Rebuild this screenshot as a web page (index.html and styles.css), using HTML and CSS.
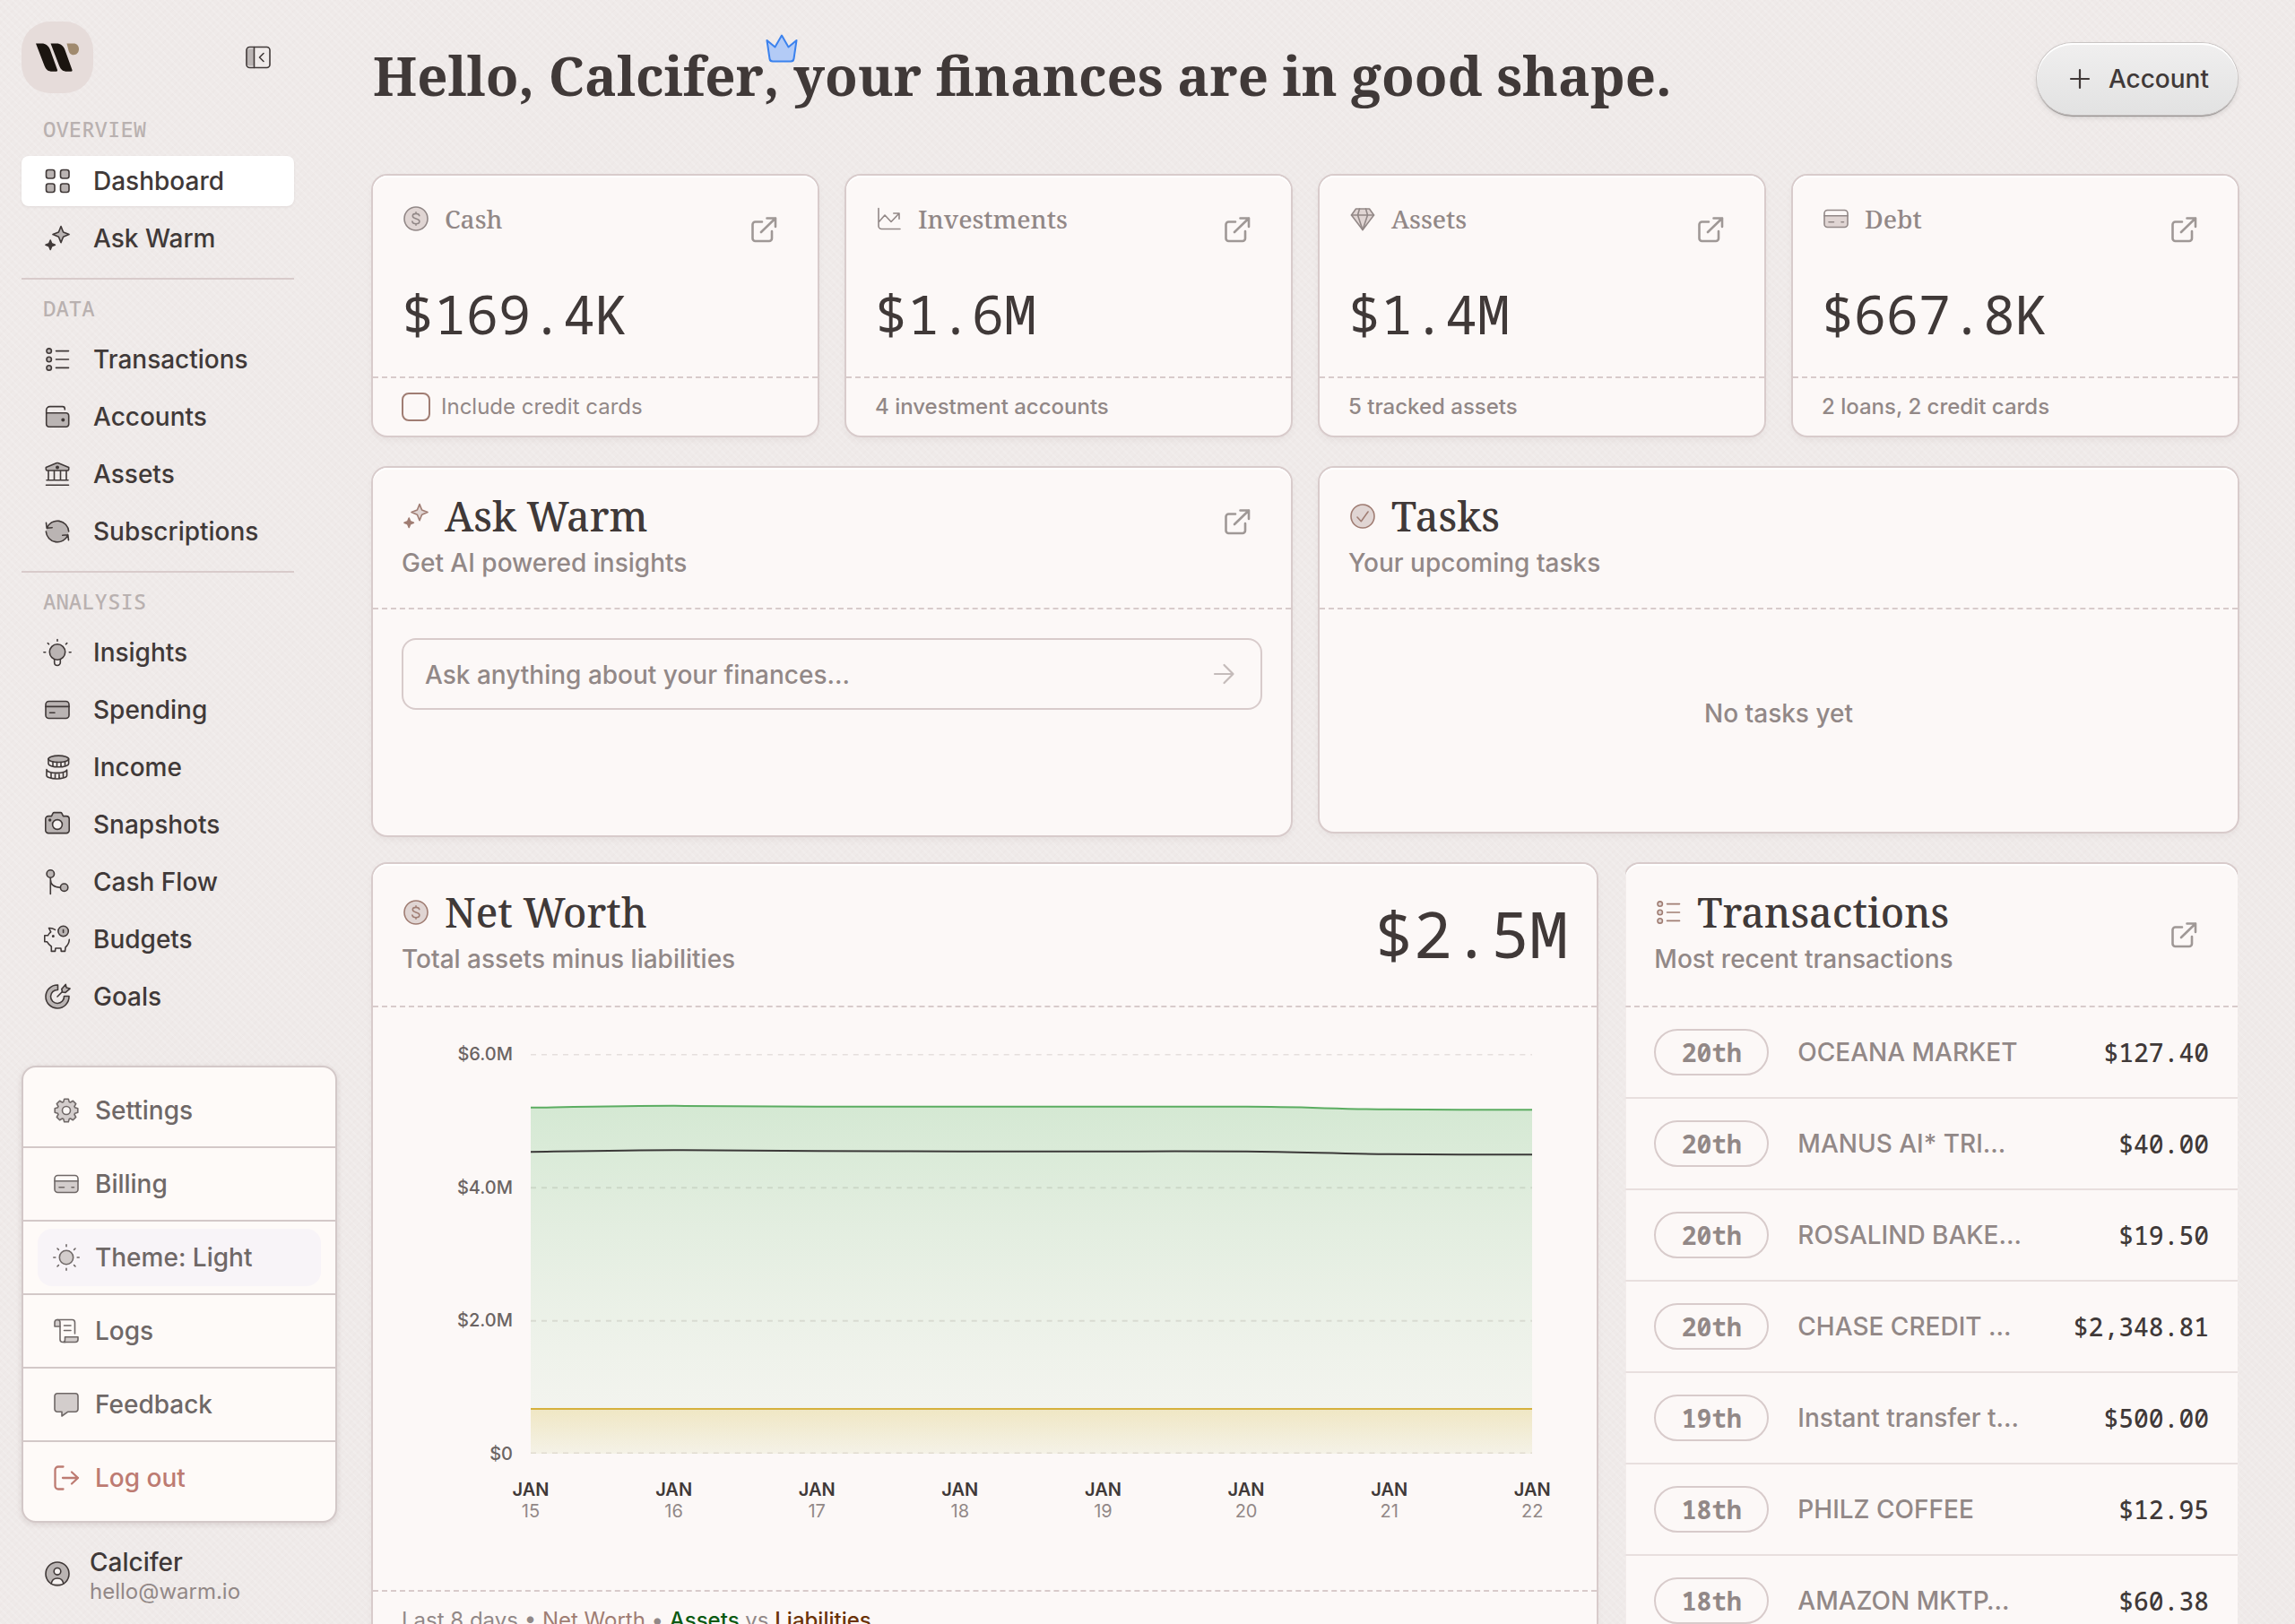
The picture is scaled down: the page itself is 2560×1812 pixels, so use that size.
FILE: index.html
```html
<!DOCTYPE html>
<html lang="en">
<head>
<meta charset="utf-8">
<title>Warm – Dashboard</title>
<meta name="viewport" content="width=device-width, initial-scale=1">
<link rel="stylesheet" href="styles.css">
</head>
<body>
<svg class="sprite" aria-hidden="true">
  <defs>
    <symbol id="i-grid" viewBox="0 0 32 32"><g class="tint"><rect x="3.5" y="3.5" width="9.5" height="9.5" rx="2.5"/><rect x="19.5" y="3.5" width="9.5" height="9.5" rx="2.5"/><rect x="3.5" y="19" width="9.5" height="9.5" rx="2.5"/><rect x="19.5" y="19" width="9.5" height="9.5" rx="2.5"/></g></symbol>
    <symbol id="i-sparkle" viewBox="0 0 32 32"><path class="tint" d="M20 2.6l2.6 6.4 6.4 2.6-6.4 2.6-2.6 6.4-2.6-6.4-6.4-2.6 6.4-2.6z"/><path fill="currentColor" d="M8.2 18l1.5 3.7 3.7 1.5-3.7 1.5-1.5 3.7-1.5-3.7-3.7-1.5 3.7-1.5z"/></symbol>
    <symbol id="i-list" viewBox="0 0 32 32"><g class="tint"><circle cx="6.7" cy="6.6" r="2.7"/><circle cx="6.7" cy="16" r="2.7"/><circle cx="6.7" cy="25.4" r="2.7"/></g><path d="M14.5 6.6h14M14.5 16h14M14.5 25.4h14"/></symbol>
    <symbol id="i-wallet" viewBox="0 0 32 32"><path class="tint" d="M3.7 11.8h22a3 3 0 0 1 3 3v9.400a3 3 0 0 1-3 3h-19a3 3 0 0 1-3-3z"/><path d="M3.700 12v-3.400a4 4 0 0 1 4-4h14a2.600 2.600 0 0 1 2.600 2.600v.8"/><circle cx="22.300" cy="19.500" r="1.200" fill="currentColor"/></symbol>
    <symbol id="i-bank" viewBox="0 0 32 32"><path class="tint" d="M3.300 8.600l11.500-4.800a3 3 0 0 1 2.400 0l11.500 4.800v1.900a1.500 1.500 0 0 1-1.500 1.500H4.800a1.500 1.500 0 0 1-1.500-1.500z"/><circle cx="16" cy="8.600" r="1.200" fill="currentColor"/><path d="M6 12.500v10M12.500 12.500v10M19.500 12.500v10M26 12.500v10M4 22.700h24M3.500 28.200h25"/></symbol>
    <symbol id="i-sync" viewBox="0 0 32 32"><circle class="tint edgeless" cx="16" cy="16" r="12.500"/><path d="M4.200 12.300a12.700 12.700 0 0 1 24.500 3.700M27.800 19.700A12.700 12.700 0 0 1 3.300 16M3.500 6.300l.7 6 6-.6M28.500 25.700l-.7-6-6 .6"/></symbol>
    <symbol id="i-bulb" viewBox="0 0 32 32"><circle class="tint" cx="16" cy="15.500" r="8.700"/><path d="M12.700 23.800v3.400a3.300 3.300 0 0 0 6.600 0v-3.400M16 1.500v1.800M.9 15.800h1.800M29.300 15.800h1.800M5.300 5.600l1.200 1.200M26.700 5.600l-1.200 1.200"/></symbol>
    <symbol id="i-card" viewBox="0 0 32 32"><rect class="tint" x="3" y="6.500" width="26" height="19" rx="3.500"/><path d="M3 12.400h26M7.500 19.300h5.500"/></symbol>
    <symbol id="i-card2" viewBox="0 0 32 32"><path class="tint edgeless" d="M3 12.700h26v9.300a3.500 3.500 0 0 1-3.500 3.500h-19A3.500 3.500 0 0 1 3 22z"/><rect x="3" y="6.500" width="26" height="19" rx="3.500"/><path d="M3 12.700h26M8 19.700h5.500M22 19.700h2.500"/></symbol>
    <symbol id="i-coins" viewBox="0 0 32 32"><ellipse class="tint" cx="17.300" cy="6.800" rx="11.300" ry="3.700"/><path d="M6 6.800v5.200c0 2 5 3.800 11.300 3.800S28.600 14 28.600 12V6.800M11 10v5M15.500 10.500v5.200M20 10.500v5.200M24.500 9.500v5"/><path class="tint edgeless" d="M4 19c6 3 16 3 22.600 0-2 4.500-20 5-22.600 0z"/><path d="M4 18.500v6.700c0 2 5 3.800 11.300 3.800s11.300-1.800 11.300-3.800v-6.200M4 19c1 2.500 6 3.600 11.300 3.600s10.300-1.100 11.300-3.600M9 22.500v5M13.500 22.700v6M18 22.700v6M22.500 22.200v5"/></symbol>
    <symbol id="i-camera" viewBox="0 0 32 32"><path class="tint" d="M6 6.600h3.500l1.600-3.200a1.500 1.500 0 0 1 1.300-.8h7.200a1.500 1.500 0 0 1 1.300.8l1.600 3.200H26a3.200 3.200 0 0 1 3.200 3.200v12.600a3.200 3.200 0 0 1-3.200 3.200H6a3.200 3.200 0 0 1-3.200-3.200V9.800A3.200 3.200 0 0 1 6 6.600z"/><circle class="hole" cx="16" cy="16" r="5.400"/><circle cx="7.700" cy="11" r=".9" fill="currentColor"/></symbol>
    <symbol id="i-flow" viewBox="0 0 32 32"><path d="M8.300 11v18.500M8.300 13c0 6 4.500 9 11 9.200"/><circle class="tint" cx="8.300" cy="7" r="4.200"/><circle class="tint" cx="23.600" cy="22.200" r="4.200"/></symbol>
    <symbol id="i-pig" viewBox="0 0 32 32"><path d="M13.500 5.300c-2-1.300-4.500-2-7-1.800l2.200 4.300c-1.500 1.200-2.600 2.400-3.200 4H1.800v7h2.800c1.200 2.200 2.700 3.900 4.700 5.200v5.400h4.200l.4-3.400h6l.4 3.400h4.200l.6-4.600c2.500-2 4-5 4.200-8.500"/><circle class="tint" cx="22.600" cy="7" r="5.700"/><path d="M22.600 5.500v3"/><circle cx="11.300" cy="12.600" r=".7" fill="currentColor"/></symbol>
    <symbol id="i-goal" viewBox="0 0 32 32"><path class="tint" d="M16.500 3A13 13 0 1 0 29 15.500h-5.500a7.500 7.500 0 1 1-7-7z"/><path d="M16 16l6.500-6.500"/><path class="tint" d="M20.800 7.600l4.400-5.200.9 3.700 3.900 1-5 4.300-3.400-.4z"/></symbol>
    <symbol id="i-gear" viewBox="0 0 32 32"><g transform="translate(16 16)"><path class="tint" d="M9.600-3.200L12.800-2.300V2.300L9.600 3.200 9 4.500 10.700 7.400 7.400 10.700 4.500 9 3.200 9.600 2.300 12.800H-2.300L-3.200 9.600-4.500 9-7.400 10.700-10.700 7.400-9 4.500-9.600 3.200-12.800 2.300V-2.300L-9.600-3.200-9-4.500-10.700-7.400-7.400-10.700-4.500-9-3.200-9.600-2.300-12.800H2.300L3.200-9.600 4.500-9 7.400-10.700 10.700-7.400 9-4.500z"/><circle class="hole" r="4.500"/></g></symbol>
    <symbol id="i-sun" viewBox="0 0 32 32"><circle class="tint" cx="16" cy="16" r="7.700"/><path d="M16 1.800v2M16 28.200v2M1.800 16h2M28.200 16h2M6 6l1.400 1.400M24.600 24.600L26 26M6 26l1.400-1.400M24.600 7.400L26 6"/></symbol>
    <symbol id="i-scroll" viewBox="0 0 32 32"><path class="tint" d="M3 11V6.500a3 3 0 0 1 6 0V11zM13 28.500a3 3 0 0 0 1.500-3v-2.700H29V25.500a3 3 0 0 1-3 3z"/><path d="M6 3.500h16.500a3 3 0 0 1 3 3V19M9 11v14.500a3 3 0 0 0 3 3h3M13.500 10h7.500M13.500 15.500h7.500"/></symbol>
    <symbol id="i-chat" viewBox="0 0 32 32"><path class="tint" d="M6 3.700h20a3 3 0 0 1 3 3v14.600a3 3 0 0 1-3 3h-8.500L11 29v-4.700H6a3 3 0 0 1-3-3V6.700a3 3 0 0 1 3-3z"/></symbol>
    <symbol id="i-logout" viewBox="0 0 32 32"><g stroke-width="2.300"><path d="M12.500 3.500H7a3.500 3.500 0 0 0-3.500 3.500v18A3.500 3.500 0 0 0 7 28.500h5.500M12 16h17M22 9.500l7 6.500-7 6.500"/></g></symbol>
    <symbol id="i-user" viewBox="0 0 32 32"><circle class="tint" cx="16" cy="16" r="13"/><circle class="hole" cx="16" cy="13.300" r="3.800"/><path class="hole" d="M9.300 27c.5-4 3.300-6 6.700-6s6.200 2 6.700 6"/></symbol>
    <symbol id="i-coin" viewBox="0 0 32 32"><circle class="tint" cx="16" cy="16" r="13"/><path d="M19.800 12.600c-.4-1.500-1.900-2.200-3.800-2.200-2.200 0-3.700 1-3.700 2.600 0 3.900 7.600 1.900 7.600 6 0 1.700-1.600 2.700-3.900 2.700s-3.800-.9-4.100-2.600M16 8.900v1.500M16 21.700v1.500"/></symbol>
    <symbol id="i-trend" viewBox="0 0 32 32"><path d="M4 4.500V24a3.500 3.500 0 0 0 3.500 3.500H28M4 20l7-8 7 7.500 9-9.500M20.800 10H27v6.200"/></symbol>
    <symbol id="i-gem" viewBox="0 0 32 32"><path class="tint" d="M8.500 5h15l5 7L16 28.500 3.500 12z"/><path d="M3.500 12h25M12.500 5l-2 7L16 28.500 21.500 12l-2-7"/></symbol>
    <symbol id="i-check" viewBox="0 0 32 32"><circle class="tint" cx="16" cy="16" r="13"/><path d="M10 17l4.300 4.700L22 11"/></symbol>
    <symbol id="i-open" viewBox="0 0 32 32"><g stroke-width="2.600"><path d="M14 7.500H6.500a3 3 0 0 0-3 3V26a3 3 0 0 0 3 3H22a3 3 0 0 0 3-3v-8M13 19L29 3.500M19.500 3.500H29V13"/></g></symbol>
    <symbol id="i-panel" viewBox="0 0 32 32"><path class="tint edgeless" d="M3 6.500h8.500v19H6a3 3 0 0 1-3-3z"/><rect x="3" y="4.500" width="26" height="23" rx="3.500"/><path d="M11.500 4.500v23M22 11.500L17.500 16l4.500 4.500"/></symbol>
    <symbol id="i-plus" viewBox="0 0 32 32"><path stroke-width="2.200" d="M16 6v20M6 16h20"/></symbol>
    <symbol id="i-arrow" viewBox="0 0 32 32"><path stroke-width="2.200" d="M5 16h20M15.500 6l10 10-10 10"/></symbol>
    <linearGradient id="assets-fill" x1="0" y1="0" x2="0" y2="1"><stop offset="0" stop-color="#3fae4b" stop-opacity=".21"/><stop offset="1" stop-color="#a8d0a8" stop-opacity=".08"/></linearGradient>
    <linearGradient id="debt-fill" x1="0" y1="0" x2="0" y2="1"><stop offset="0" stop-color="#e5b92e" stop-opacity=".22"/><stop offset="1" stop-color="#e5b92e" stop-opacity=".05"/></linearGradient>
  </defs>
</svg>

<div class="app">
  <aside class="sidebar">
    <div class="brand">
      <a class="logo" href="#" aria-label="Warm">
        <svg viewBox="0 0 80 80"><path fill="#1b1510" d="M16 24.500h6.500c4.500 0 7.500 2.500 9.200 6.500L40 54c.3 1 0 1.700-1.200 1.700h-4.500c-4.500 0-7-2-8.800-6.500zM32.500 24.500H39c4.500 0 7.500 2.500 9.200 6.500L56.500 54c.3 1 0 1.700-1.200 1.700h-4.500c-4.500 0-7-2-8.800-6.500z"/><path fill="#a08a6e" d="M50.500 24.500h7.500c3.600 0 6 2.700 6 6.300s-2.500 6.500-6 6.500-4.800-2.500-5.600-5.300z"/></svg>
      </a>
      <button class="collapse" aria-label="Collapse sidebar"><svg class="icon"><use href="#i-panel"/></svg></button>
    </div>
    <nav class="nav">
      <h2 class="nav-label nav-label-first">OVERVIEW</h2>
      <a class="nav-item active" href="#"><svg class="icon"><use href="#i-grid"/></svg>Dashboard</a>
      <a class="nav-item" href="#"><svg class="icon"><use href="#i-sparkle"/></svg>Ask Warm</a>
      <hr class="rule">
      <h2 class="nav-label">DATA</h2>
      <a class="nav-item" href="#"><svg class="icon"><use href="#i-list"/></svg>Transactions</a>
      <a class="nav-item" href="#"><svg class="icon"><use href="#i-wallet"/></svg>Accounts</a>
      <a class="nav-item" href="#"><svg class="icon"><use href="#i-bank"/></svg>Assets</a>
      <a class="nav-item" href="#"><svg class="icon"><use href="#i-sync"/></svg>Subscriptions</a>
      <hr class="rule">
      <h2 class="nav-label">ANALYSIS</h2>
      <a class="nav-item" href="#"><svg class="icon"><use href="#i-bulb"/></svg>Insights</a>
      <a class="nav-item" href="#"><svg class="icon"><use href="#i-card"/></svg>Spending</a>
      <a class="nav-item" href="#"><svg class="icon"><use href="#i-coins"/></svg>Income</a>
      <a class="nav-item" href="#"><svg class="icon"><use href="#i-camera"/></svg>Snapshots</a>
      <a class="nav-item" href="#"><svg class="icon"><use href="#i-flow"/></svg>Cash Flow</a>
      <a class="nav-item" href="#"><svg class="icon"><use href="#i-pig"/></svg>Budgets</a>
      <a class="nav-item" href="#"><svg class="icon"><use href="#i-goal"/></svg>Goals</a>
    </nav>
    <div class="menu">
      <div class="menu-row"><a class="menu-item" href="#"><svg class="icon"><use href="#i-gear"/></svg>Settings</a></div>
      <div class="menu-row"><a class="menu-item" href="#"><svg class="icon"><use href="#i-card2"/></svg>Billing</a></div>
      <div class="menu-row"><button class="menu-item highlighted"><svg class="icon"><use href="#i-sun"/></svg>Theme: Light</button></div>
      <div class="menu-row"><a class="menu-item" href="#"><svg class="icon"><use href="#i-scroll"/></svg>Logs</a></div>
      <div class="menu-row"><a class="menu-item" href="#"><svg class="icon"><use href="#i-chat"/></svg>Feedback</a></div>
      <div class="menu-row"><button class="menu-item danger"><svg class="icon"><use href="#i-logout"/></svg>Log out</button></div>
    </div>
    <button class="user">
      <svg class="icon"><use href="#i-user"/></svg>
      <span class="user-text"><span class="user-name">Calcifer</span><span class="user-mail">hello@warm.io</span></span>
    </button>
  </aside>

  <main class="main">
    <header class="top">
      <h1 class="hello">Hello, <span class="name">Calcifer<svg class="crown" viewBox="0 0 36 32"><path d="M1.500 7l9 7.500L18 1.500l7.500 13L34.500 7l-3 20.500a3.500 3.500 0 0 1-3.500 3H8a3.500 3.500 0 0 1-3.500-3z"/></svg></span>, your finances are in good shape.</h1>
      <button class="add"><svg class="icon"><use href="#i-plus"/></svg>Account</button>
    </header>

    <section class="stats">
      <article class="card stat">
        <div class="stat-head"><h2 class="stat-title"><svg class="icon"><use href="#i-coin"/></svg>Cash</h2><a class="open" href="#" aria-label="Open cash"><svg class="icon"><use href="#i-open"/></svg></a></div>
        <p class="amount">$169.4K</p>
        <div class="foot"><input class="tick" type="checkbox" id="cc"><label for="cc">Include credit cards</label></div>
      </article>
      <article class="card stat">
        <div class="stat-head"><h2 class="stat-title"><svg class="icon"><use href="#i-trend"/></svg>Investments</h2><a class="open" href="#" aria-label="Open investments"><svg class="icon"><use href="#i-open"/></svg></a></div>
        <p class="amount">$1.6M</p>
        <div class="foot"><p class="note">4 investment accounts</p></div>
      </article>
      <article class="card stat">
        <div class="stat-head"><h2 class="stat-title"><svg class="icon"><use href="#i-gem"/></svg>Assets</h2><a class="open" href="#" aria-label="Open assets"><svg class="icon"><use href="#i-open"/></svg></a></div>
        <p class="amount">$1.4M</p>
        <div class="foot"><p class="note">5 tracked assets</p></div>
      </article>
      <article class="card stat">
        <div class="stat-head"><h2 class="stat-title"><svg class="icon"><use href="#i-card2"/></svg>Debt</h2><a class="open" href="#" aria-label="Open debt"><svg class="icon"><use href="#i-open"/></svg></a></div>
        <p class="amount">$667.8K</p>
        <div class="foot"><p class="note">2 loans, 2 credit cards</p></div>
      </article>
    </section>

    <section class="pair">
      <article class="card ask">
        <header class="head">
          <div class="titles"><h2 class="title"><svg class="icon"><use href="#i-sparkle"/></svg>Ask Warm</h2><p class="sub">Get AI powered insights</p></div>
          <a class="open" href="#" aria-label="Open Ask Warm"><svg class="icon"><use href="#i-open"/></svg></a>
        </header>
        <form class="prompt">
          <input class="prompt-input" type="text" aria-label="Ask anything" placeholder="Ask anything about your finances...">
          <button class="send" type="button" aria-label="Send"><svg class="icon"><use href="#i-arrow"/></svg></button>
        </form>
      </article>
      <article class="card tasks">
        <header class="head">
          <div class="titles"><h2 class="title"><svg class="icon"><use href="#i-check"/></svg>Tasks</h2><p class="sub">Your upcoming tasks</p></div>
        </header>
        <p class="empty">No tasks yet</p>
      </article>
    </section>

    <section class="wide">
      <article class="card">
        <header class="head head-center">
          <div class="titles"><h2 class="title"><svg class="icon"><use href="#i-coin"/></svg>Net Worth</h2><p class="sub">Total assets minus liabilities</p></div>
          <p class="total">$2.5M</p>
        </header>
        <div class="chart">
          <div class="y-axis"><span>$6.0M</span><span>$4.0M</span><span>$2.0M</span><span>$0</span></div>
          <svg class="plot" viewBox="0 0 1118 447" preserveAspectRatio="none" role="img" aria-label="Net worth over the last 8 days">
            <g class="gridlines"><path d="M0 0.500H1118M0 149.500H1118M0 298.500H1118M0 446.500H1118"/></g>
            <path fill="url(#assets-fill)" d="M0 60C60 59 110 58 160 58S260 59 320 59 420 59 479 59 580 59 639 59 740 59 799 59 900 61.500 958 62 1060 62.500 1118 62.500V447H0z"/>
            <path fill="url(#debt-fill)" d="M0 397H1118V447H0z"/>
            <path class="line assets" d="M0 60C60 59 110 58 160 58S260 59 320 59 420 59 479 59 580 59 639 59 740 59 799 59 900 61.500 958 62 1060 62.500 1118 62.500"/>
            <path class="line net" d="M0 109.500C60 108.500 110 107.500 160 107.500S260 108.500 320 108.500 420 109 479 109 580 109 639 109 740 108.500 799 109 900 111.500 958 112 1060 112.500 1118 112.500"/>
            <path class="line debt" d="M0 397H1118"/>
          </svg>
          <div class="x-axis">
            <span class="day"><b>JAN</b>15</span><span class="day"><b>JAN</b>16</span><span class="day"><b>JAN</b>17</span><span class="day"><b>JAN</b>18</span><span class="day"><b>JAN</b>19</span><span class="day"><b>JAN</b>20</span><span class="day"><b>JAN</b>21</span><span class="day"><b>JAN</b>22</span>
          </div>
        </div>
        <div class="foot"><p>Last 8 days • <span class="k-net">Net Worth</span> • <span class="k-assets">Assets</span> vs <span class="k-debt">Liabilities</span></p></div>
      </article>

      <article class="card recent">
        <header class="head head-center">
          <div class="titles"><h2 class="title"><svg class="icon"><use href="#i-list"/></svg>Transactions</h2><p class="sub">Most recent transactions</p></div>
          <a class="open" href="#" aria-label="Open transactions"><svg class="icon"><use href="#i-open"/></svg></a>
        </header>
        <table class="rows">
          <tbody>
            <tr><td class="c-day"><span class="pill">20th</span></td><td class="c-name">OCEANA MARKET</td><td class="c-sum">$127.40</td></tr>
            <tr><td class="c-day"><span class="pill">20th</span></td><td class="c-name">MANUS AI* TRI…</td><td class="c-sum">$40.00</td></tr>
            <tr><td class="c-day"><span class="pill">20th</span></td><td class="c-name">ROSALIND BAKE…</td><td class="c-sum">$19.50</td></tr>
            <tr><td class="c-day"><span class="pill">20th</span></td><td class="c-name">CHASE CREDIT …</td><td class="c-sum">$2,348.81</td></tr>
            <tr><td class="c-day"><span class="pill">19th</span></td><td class="c-name">Instant transfer t…</td><td class="c-sum">$500.00</td></tr>
            <tr><td class="c-day"><span class="pill">18th</span></td><td class="c-name">PHILZ COFFEE</td><td class="c-sum">$12.95</td></tr>
            <tr><td class="c-day"><span class="pill">18th</span></td><td class="c-name">AMAZON MKTP…</td><td class="c-sum">$60.38</td></tr>
          </tbody>
        </table>
      </article>
    </section>
  </main>
</div>
</body>
</html>
```

FILE: styles.css
```css
:root {
  --ink: #403938;
  --muted: #928887;
  --line: #d8cbcb;
  --card: #fcf8f7;
  --sans: Inter, "Liberation Sans", sans-serif;
  --serif: "Noto Serif", "DejaVu Serif Condensed", "DejaVu Serif", serif;
  --mono: "Noto Sans Mono", "DejaVu Sans Mono", "Liberation Mono", monospace;
}

* { box-sizing: border-box; }

body {
  margin: 0;
  color: var(--ink);
  font: 500 28px/40px var(--sans);
  background-color: #efeae9;
  background-image:
    repeating-linear-gradient(45deg, rgba(255, 255, 255, .14) 0 2px, transparent 2px 6px),
    repeating-linear-gradient(-45deg, rgba(90, 60, 50, .012) 0 2px, transparent 2px 6px);
}

h1, h2, p { margin: 0; }
a { color: inherit; text-decoration: none; }
button { border: 0; padding: 0; background: none; color: inherit; font: inherit; text-align: left; cursor: pointer; }

.sprite { position: absolute; width: 0; height: 0; }

.icon {
  flex: none;
  width: 32px;
  height: 32px;
  fill: none;
  stroke: currentColor;
  stroke-width: 1.6;
  stroke-linecap: round;
  stroke-linejoin: round;
  --tint: #bab4b3;
  --hole: #f6f2f1;
}
.tint { fill: var(--tint); }
.hole { fill: var(--hole); }
.edgeless { stroke: none; }

.app { display: flex; height: 100vh; }

/* Sidebar */
.sidebar {
  flex: none;
  width: 400px;
  padding: 24px;
  display: flex;
  flex-direction: column;
}
.brand { width: 304px; display: flex; justify-content: space-between; padding-right: 24px; }
.logo { width: 80px; height: 80px; border-radius: 32px; background: #e6dcda; }
.logo svg { display: block; }
.collapse { height: 80px; display: flex; align-items: center; }
.nav { width: 304px; display: flex; flex-direction: column; gap: 8px; }
.nav-label {
  height: 61px;
  margin-bottom: -8px;
  padding: 12px 24px 0;
  font: 500 24px/40px var(--mono);
  color: #b9b1b0;
}
.nav-label-first { height: 70px; padding-top: 20px; }
.nav-item {
  height: 56px;
  padding: 0 24px;
  display: flex;
  align-items: center;
  gap: 24px;
  border-radius: 8px;
}
.nav-item.active { background: #fff; box-shadow: 0 1px 3px rgba(60, 40, 40, .08); }
.rule { width: 100%; height: 2px; margin: 8px 0 -8px; border: 0; background: var(--line); }

.menu {
  margin-top: auto;
  padding: 8px 0;
  border: 2px solid #d3c8c8;
  border-radius: 16px;
  background: #fefaf8;
  color: #6f6867;
  box-shadow: 0 2px 6px rgba(80, 50, 50, .14);
}
.menu-row { padding: 8px 16px; }
.menu-row + .menu-row { border-top: 2px solid #d3c8c8; }
.menu-item {
  width: 100%;
  height: 64px;
  padding: 0 16px;
  display: flex;
  align-items: center;
  gap: 16px;
  border-radius: 16px;
}
.menu .icon { --tint: #d3cdcc; --hole: #fefaf8; }
.menu-item.highlighted { background: #f8f4f8; }
.menu-item.danger { color: #bd7b72; }

.user { margin-top: 24px; height: 65px; padding-left: 24px; display: flex; align-items: center; gap: 20px; }
.user-text { display: flex; flex-direction: column; padding-top: 6px; }
.user-name { line-height: 34px; }
.user-mail { font-size: 24px; line-height: 32px; font-weight: 400; color: var(--muted); }

/* Main column */
.main {
  flex: 1;
  min-width: 0;
  padding: 48px 64px 32px 16px;
  overflow-y: auto;
  scrollbar-width: none;
}
.top { display: flex; justify-content: space-between; align-items: flex-start; height: 80px; margin-bottom: 68px; }
.hello { font: 700 60px/72px var(--serif); white-space: nowrap; }
.name { position: relative; display: inline-block; }
.crown {
  position: absolute;
  right: -38px;
  top: -10px;
  width: 36px;
  height: 32px;
  fill: #b3cbf6;
  stroke: #3b82ee;
  stroke-width: 2;
  stroke-linejoin: round;
}
.add {
  height: 80px;
  padding: 0 32px;
  display: flex;
  align-items: center;
  gap: 16px;
  border-radius: 40px;
  background: linear-gradient(#f0efef, #e2e2e2);
  box-shadow: inset 0 2px 0 #fff, 0 0 0 1px #c9c5c4, 0 2px 1px #8f8b8a, 0 3px 6px rgba(0, 0, 0, .12);
}

.card {
  border-radius: 16px;
  background: var(--card);
  box-shadow: inset 0 2px 0 #fff, 0 0 0 2px var(--line), 0 4px 8px rgba(80, 50, 50, .07);
}
.card .icon { color: #a07d73; --tint: #e0d5d3; }
.card .open .icon { color: #9f9896; }

.open { flex: none; width: 56px; height: 56px; display: flex; align-items: center; justify-content: center; }

.foot {
  height: 66px;
  padding: 0 32px;
  display: flex;
  align-items: center;
  gap: 12px;
  border-top: 2px dashed var(--line);
  font-size: 24px;
  font-weight: 400;
  color: var(--muted);
}
.note { font-weight: 500; }

.stats { display: grid; grid-template-columns: repeat(4, 1fr); gap: 32px; margin-bottom: 36px; }
.stat-head { display: flex; justify-content: space-between; padding: 32px 32px 0; }
.stat-title { display: flex; gap: 16px; font: 500 28px/32px var(--serif); color: var(--muted); }
.card .stat-title .icon { color: var(--muted); }
.amount { padding: 30px 32px 34px; font: 400 60px/72px var(--mono); }
.tick {
  appearance: none;
  width: 32px;
  height: 32px;
  margin: 0;
  border: 2px solid #a07d73;
  border-radius: 8px;
}

.pair { display: grid; grid-template-columns: 1fr 1fr; gap: 32px; align-items: start; margin-bottom: 32px; }
.head {
  height: 158px;
  padding: 32px 32px 30px;
  display: flex;
  justify-content: space-between;
  align-items: flex-start;
  border-bottom: 2px dashed var(--line);
}
.head-center { height: 160px; padding-bottom: 32px; align-items: center; }
.titles { display: flex; flex-direction: column; gap: 10px; }
.title { display: flex; align-items: center; gap: 16px; font: 500 45px/44px var(--serif); }
.sub { color: var(--muted); }
.ask { min-height: 410px; }
.prompt {
  height: 80px;
  margin: 32px;
  padding: 0 24px;
  display: flex;
  align-items: center;
  border: 2px solid var(--line);
  border-radius: 16px;
}
.prompt-input { flex: 1; min-width: 0; padding: 2px 0 0; border: 0; outline: 0; background: none; font: inherit; color: inherit; }
.prompt-input::placeholder { color: var(--muted); opacity: 1; }
.send { display: flex; }
.card .send .icon { color: #c4bbba; }
.tasks { min-height: 406px; display: flex; flex-direction: column; }
.empty { flex: 1; display: flex; align-items: center; justify-content: center; padding-bottom: 16px; color: var(--muted); }

.wide { display: grid; grid-template-columns: 2fr 1fr; gap: 32px; align-items: start; }
.total { margin-top: -4px; font: 400 72px/92px var(--mono); }

/* Chart */
.chart {
  display: grid;
  grid-template-columns: 124px 1fr;
  column-gap: 20px;
  row-gap: 28px;
  padding: 52px 72px 76px 32px;
  font-size: 20px;
  line-height: 24px;
}
.y-axis {
  display: flex;
  flex-direction: column;
  justify-content: space-between;
  margin: -12px 0;
  text-align: right;
  color: #6b6463;
}
.plot { display: block; width: 100%; height: 446px; }
.gridlines { stroke: rgba(120, 100, 95, .17); stroke-width: 2; stroke-dasharray: 6 6; }
.line { fill: none; stroke-width: 2; vector-effect: non-scaling-stroke; }
.assets { stroke: #5cad62; }
.net { stroke: #3b3938; }
.debt { stroke: #d6b13c; }
.x-axis { grid-column: 2; display: flex; justify-content: space-between; margin: 0 -32px; }
.day { width: 64px; display: flex; flex-direction: column; align-items: center; font-weight: 400; color: var(--muted); }
.day b { font-weight: 600; color: var(--ink); }
.k-net { color: #a07d73; }
.k-assets { color: #0c5a12; font-weight: 500; }
.k-debt { color: #6b3208; font-weight: 500; }

/* Recent transactions */
.recent { clip-path: inset(-2px 0 0 0); }
.rows { width: 100%; border-collapse: separate; border-spacing: 0; table-layout: fixed; }
.rows td { height: 102px; padding: 0; border-bottom: 2px solid #e8dfde; white-space: nowrap; }
.rows .c-day { width: 192px; padding-left: 32px; }
.c-name { color: var(--muted); }
.rows .c-sum { width: 232px; padding-right: 32px; text-align: right; font-family: var(--mono); }
.pill {
  display: block;
  width: 128px;
  border: 2px solid var(--line);
  border-radius: 26px;
  font: 700 28px/48px var(--mono);
  text-align: center;
  color: var(--muted);
}
```
